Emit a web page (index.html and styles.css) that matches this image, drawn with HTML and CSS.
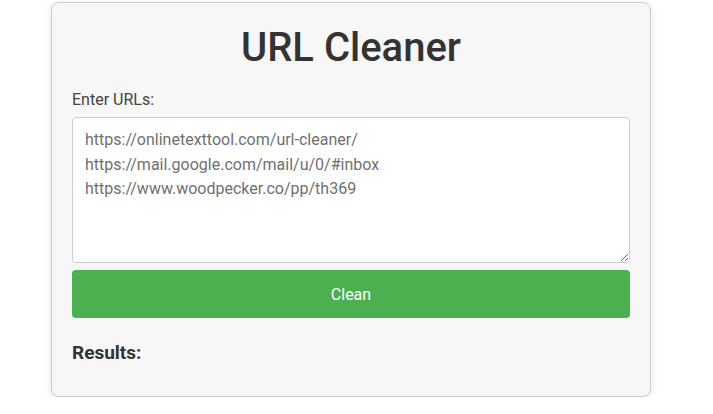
FILE: index.html
```html
<!DOCTYPE html>
<html>
<head>
<meta charset="utf-8">
<link rel="stylesheet" href="styles.css">
</head>
<body>
<div class="card">
  <h1 class="title">URL Cleaner</h1>
  <label class="label" for="urls">Enter URLs:</label>
  <textarea id="urls" class="input">https://onlinetexttool.com/url-cleaner/
https://mail.google.com/mail/u/0/#inbox
https://www.woodpecker.co/pp/th369</textarea>
  <button class="btn">Clean</button>
  <h3 class="results">Results:</h3>
</div>
</body>
</html>
```
FILE: styles.css
```css
html, body {
  margin: 0;
  padding: 0;
  background: #ffffff;
  font-family: Roboto, "Liberation Sans", sans-serif;
}
body {
  padding: 2px 0 0 51px;
}
.card {
  width: 600px;
  height: 395px;
  box-sizing: border-box;
  background: #f7f7f7;
  border: 1px solid #cccccc;
  border-radius: 8px;
  box-shadow: 0 2px 8px rgba(0,0,0,0.1);
  padding: 0 20px;
  display: flex;
  flex-direction: column;
}
.title {
  margin: 21px 0 0 0;
  text-align: center;
  font-size: 40px;
  font-weight: 500;
  line-height: 48px;
  color: #333333;
}
.label {
  margin-top: 18px;
  font-size: 16px;
  line-height: 20px;
  color: #444444;
}
.input {
  margin-top: 7px;
  height: 146px;
  box-sizing: border-box;
  border: 1px solid #cccccc;
  border-radius: 4px;
  background: #ffffff;
  padding: 10px 12px 8px 12px;
  font-family: Roboto, "Liberation Sans", sans-serif;
  font-size: 16px;
  line-height: 24.5px;
  color: #707070;
  resize: vertical;
  outline: none;
}
.btn {
  margin-top: 7px;
  height: 48px;
  border: none;
  border-radius: 4px;
  background: #4caf50;
  color: #ffffff;
  font-family: Roboto, "Liberation Sans", sans-serif;
  font-size: 16px;
}
.results {
  margin: 24px 0 0 0;
  font-size: 19px;
  line-height: 22px;
  font-weight: 700;
  color: #333333;
}
```
